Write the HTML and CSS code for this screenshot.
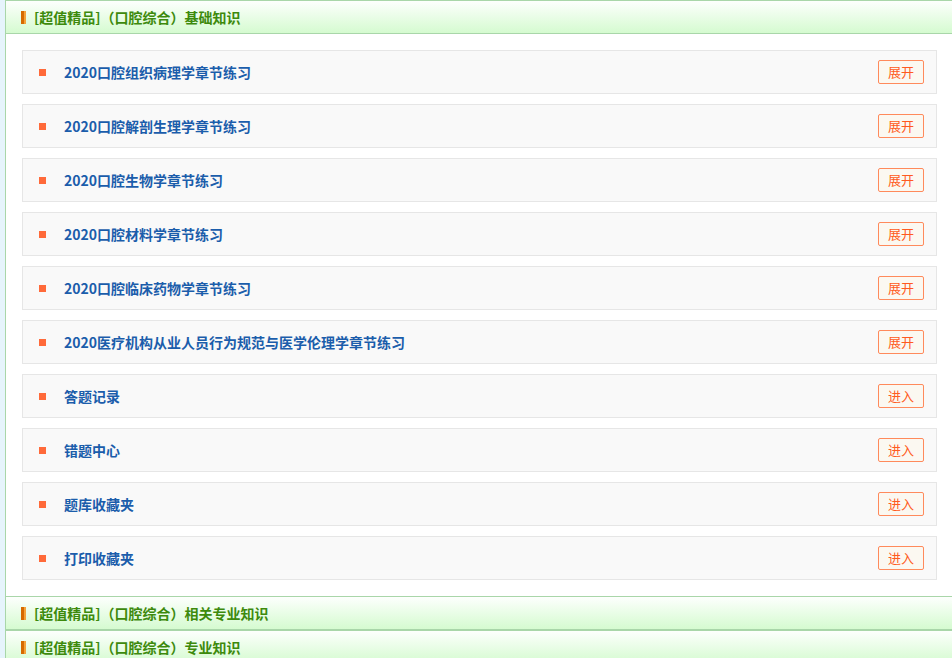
FILE: index.html
```html
<!DOCTYPE html>
<html>
<head>
  <meta charset="utf-8">
  <title>口腔综合</title>
  <link rel="stylesheet" href="styles.css">
</head>
<body>
  <div class="wrap">

    <div class="sec-title"><span class="mark"></span>[超值精品]（口腔综合）基础知识</div>
    <div class="sec-body">
      <div class="item"><span class="dot"></span><span class="name">2020口腔组织病理学章节练习</span><a class="btn">展开</a></div>
      <div class="item"><span class="dot"></span><span class="name">2020口腔解剖生理学章节练习</span><a class="btn">展开</a></div>
      <div class="item"><span class="dot"></span><span class="name">2020口腔生物学章节练习</span><a class="btn">展开</a></div>
      <div class="item"><span class="dot"></span><span class="name">2020口腔材料学章节练习</span><a class="btn">展开</a></div>
      <div class="item"><span class="dot"></span><span class="name">2020口腔临床药物学章节练习</span><a class="btn">展开</a></div>
      <div class="item"><span class="dot"></span><span class="name">2020医疗机构从业人员行为规范与医学伦理学章节练习</span><a class="btn">展开</a></div>
      <div class="item"><span class="dot"></span><span class="name">答题记录</span><a class="btn">进入</a></div>
      <div class="item"><span class="dot"></span><span class="name">错题中心</span><a class="btn">进入</a></div>
      <div class="item"><span class="dot"></span><span class="name">题库收藏夹</span><a class="btn">进入</a></div>
      <div class="item"><span class="dot"></span><span class="name">打印收藏夹</span><a class="btn">进入</a></div>
    </div>

    <div class="sec-title"><span class="mark"></span>[超值精品]（口腔综合）相关专业知识</div>
    <div class="sec-title"><span class="mark"></span>[超值精品]（口腔综合）专业知识</div>

  </div>
</body>
</html>
```

FILE: styles.css
```css
body {
  margin: 0;
  background: #e6f4fc;
  font-family: "Microsoft YaHei", "Noto Sans CJK SC", sans-serif;
  font-size: 14px;
}

.wrap {
  margin-left: 5px;
  border-left: 1px solid #a9d6a9;
  background: #fff;
  min-height: 658px;
}

.sec-title {
  height: 32px;
  border-top: 1px solid #a9d6a9;
  border-bottom: 1px solid #a9d6a9;
  background: linear-gradient(to bottom, #fdfffd, #d5fbd0);
  color: #3d8a0c;
  font-weight: bold;
  display: flex;
  align-items: center;
  padding-left: 15px;
}

.mark {
  width: 5px;
  height: 13px;
  margin-right: 8px;
  background: linear-gradient(to right, #d66a00 55%, #f4a23b 55%);
}

.sec-body {
  padding: 16px 15px 16px 16px;
  display: flex;
  flex-direction: column;
  gap: 10px;
}

.item {
  height: 42px;
  border: 1px solid #e6e6e6;
  background: #f9f9f9;
  display: flex;
  align-items: center;
  padding: 0 12px 0 16px;
}

.dot {
  width: 7px;
  height: 7px;
  background: #ff6a3a;
  margin-right: 18px;
}

.name {
  flex: 1;
  color: #1b5dab;
  font-weight: bold;
}

.btn {
  height: 22px;
  line-height: 22px;
  padding: 0 9px;
  border: 1px solid #ff8a5c;
  border-radius: 2px;
  background: #fbf8f1;
  color: #ff5a20;
  font-size: 13px;
  cursor: pointer;
}
```
